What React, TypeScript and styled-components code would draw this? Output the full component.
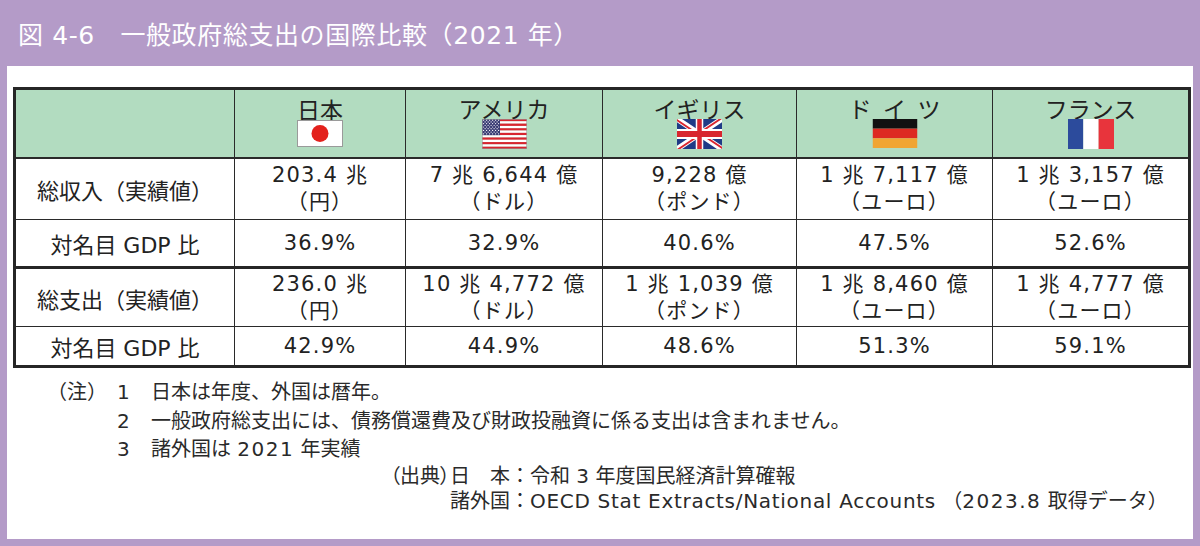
import React from "react";
import styled, { createGlobalStyle } from "styled-components";

const GlobalStyle = createGlobalStyle`
  body {
    margin: 0;
    background: #b49bc8;
    font-family: "DejaVu Sans", "Noto Sans CJK JP", sans-serif;
  }
`;

const Page = styled.div`
  width: 1200px;
  height: 546px;
  display: flex;
  flex-direction: column;
  background: #b49bc8;
`;

const TitleBar = styled.div`
  height: 66px;
  display: flex;
  align-items: center;
  padding-left: 18px;
  box-sizing: border-box;
  color: #fff;
  font-size: 25px;
  letter-spacing: 0.6px;
`;

const Panel = styled.div`
  margin: 0 7px;
  height: 473px;
  background: #fff;
  padding: 21px 6px 0;
  box-sizing: border-box;
`;

const Table = styled.table`
  width: 1175px;
  border-collapse: collapse;
  table-layout: fixed;
  border: 3px solid #262626;
  color: #222;
`;

const Row = styled.tr<{ $h: number; $groupStart?: boolean }>`
  height: ${(p) => p.$h}px;
  & > td,
  & > th {
    ${(p) => (p.$groupStart ? "border-top: 3px solid #262626;" : "")}
  }
`;

const HeadCell = styled.th`
  background: #b2dcc0;
  border: 1.5px solid #2a2a2a;
  border-bottom: 2px solid #2a2a2a;
  font-weight: 400;
  font-size: 23px;
  line-height: 24px;
  text-align: center;
  vertical-align: middle;
  padding: 0;
`;

const CountryName = styled.div`
  white-space: pre;
`;

const FlagBox = styled.div`
  display: flex;
  justify-content: center;
  margin-top: -3px;
`;

const LabelCell = styled.td`
  border: 1.5px solid #2a2a2a;
  font-size: 22px;
  text-align: center;
  vertical-align: middle;
  padding: 0;
`;

const ValueCell = styled.td`
  border: 1.5px solid #2a2a2a;
  font-size: 21px;
  line-height: 27px;
  text-align: center;
  vertical-align: middle;
  padding: 0;
  letter-spacing: 1.2px;
`;

const Notes = styled.div`
  margin-top: 10px;
  display: grid;
  grid-template-columns: 70px 34px auto;
  padding-left: 34px;
  font-size: 20px;
  line-height: 28.5px;
  color: #2a2a2a;
`;

const Source = styled.div`
  margin-left: 368px;
  display: grid;
  grid-template-columns: 69px 60px 20px auto;
  font-size: 20px;
  line-height: 25px;
  color: #2a2a2a;
  white-space: nowrap;
`;

const SourceTag = styled.span`
  padding-left: 9px;
  font-feature-settings: "palt";
`;

const Spread = styled.span`
  display: flex;
  justify-content: space-between;
`;

const Wide = styled.span<{ $ls?: number }>`
  letter-spacing: ${(p) => p.$ls ?? 1.5}px;
`;

const JapanFlag = () => (
  <svg width="46" height="27" viewBox="0 0 46 27">
    <rect x="0.5" y="0.5" width="45" height="26" fill="#fff" stroke="#9a9a9a" />
    <circle cx="23" cy="13.5" r="8.5" fill="#e3211c" />
  </svg>
);

const UsFlag = () => {
  const stripes = Array.from({ length: 13 }, (_, i) => i);
  const stars: [number, number][] = [];
  for (let r = 0; r < 9; r++) {
    const n = r % 2 === 0 ? 6 : 5;
    for (let c = 0; c < n; c++) {
      stars.push([1.6 + c * 3 + (r % 2 === 0 ? 0 : 1.5), 1.2 + r * 1.7]);
    }
  }
  return (
    <svg width="45" height="30" viewBox="0 0 45 30">
      {stripes.map((i) => (
        <rect
          key={i}
          x="0"
          y={(i * 30) / 13}
          width="45"
          height={30 / 13 + 0.05}
          fill={i % 2 === 0 ? "#d8262f" : "#fff"}
        />
      ))}
      <rect x="0" y="0" width="18" height={(30 / 13) * 7} fill="#3a3c74" />
      {stars.map(([x, y], i) => (
        <circle key={i} cx={x} cy={y} r="0.6" fill="#fff" />
      ))}
      <rect x="0.3" y="0.3" width="44.4" height="29.4" fill="none" stroke="#999" strokeWidth="0.6" />
    </svg>
  );
};

const UkFlag = () => (
  <svg width="45" height="30" viewBox="0 0 60 30" preserveAspectRatio="none">
    <defs>
      <clipPath id="ukT">
        <path d="M30,15 h30 v15 z v15 h-30 z h-30 v-15 z v-15 h30 z" />
      </clipPath>
    </defs>
    <rect width="60" height="30" fill="#1f3b86" />
    <path d="M0,0 L60,30 M60,0 L0,30" stroke="#fff" strokeWidth="6" />
    <path d="M0,0 L60,30 M60,0 L0,30" clipPath="url(#ukT)" stroke="#d8262f" strokeWidth="4" />
    <path d="M30,0 v30 M0,15 h60" stroke="#fff" strokeWidth="10" />
    <path d="M30,0 v30 M0,15 h60" stroke="#d8262f" strokeWidth="6" />
  </svg>
);

const GermanyFlag = () => (
  <svg width="46" height="29" viewBox="0 0 46 30">
    <rect y="0" width="46" height="10" fill="#111" />
    <rect y="10" width="46" height="10" fill="#dd2a22" />
    <rect y="20" width="46" height="10" fill="#f1a532" />
  </svg>
);

const FranceFlag = () => (
  <svg width="46" height="30" viewBox="0 0 46 30">
    <rect x="0" width="15.4" height="30" fill="#2c4b9c" />
    <rect x="15.3" width="15.4" height="30" fill="#fff" />
    <rect x="30.6" width="15.4" height="30" fill="#e8343c" />
  </svg>
);

const countries = [
  { name: "日本", flag: <JapanFlag /> },
  { name: "アメリカ", flag: <UsFlag /> },
  { name: "イギリス", flag: <UkFlag /> },
  { name: "ド\u2002イ\u2002ツ", flag: <GermanyFlag /> },
  { name: "フランス", flag: <FranceFlag /> },
];

const revenue = [
  ["203.4 兆", "（円）"],
  ["7 兆 6,644 億", "（ドル）"],
  ["9,228 億", "（ポンド）"],
  ["1 兆 7,117 億", "（ユーロ）"],
  ["1 兆 3,157 億", "（ユーロ）"],
];
const revenueRatio = ["36.9%", "32.9%", "40.6%", "47.5%", "52.6%"];
const spending = [
  ["236.0 兆", "（円）"],
  ["10 兆 4,772 億", "（ドル）"],
  ["1 兆 1,039 億", "（ポンド）"],
  ["1 兆 8,460 億", "（ユーロ）"],
  ["1 兆 4,777 億", "（ユーロ）"],
];
const spendingRatio = ["42.9%", "44.9%", "48.6%", "51.3%", "59.1%"];

const colWidths = [220, 171, 197, 194, 196, 197];

const App = () => (
  <Page>
    <GlobalStyle />
    <TitleBar>図 4-6　一般政府総支出の国際比較（2021 年）</TitleBar>
    <Panel>
      <Table>
        <colgroup>
          {colWidths.map((w, i) => (
            <col key={i} style={{ width: w }} />
          ))}
        </colgroup>
        <tbody>
          <Row $h={69}>
            <HeadCell />
            {countries.map((c) => (
              <HeadCell key={c.name}>
                <CountryName>{c.name}</CountryName>
                <FlagBox>{c.flag}</FlagBox>
              </HeadCell>
            ))}
          </Row>
          <Row $h={62}>
            <LabelCell>総収入（実績値）</LabelCell>
            {revenue.map(([a, b], i) => (
              <ValueCell key={i}>
                {a}
                <br />
                {b}
              </ValueCell>
            ))}
          </Row>
          <Row $h={48}>
            <LabelCell>対名目 GDP 比</LabelCell>
            {revenueRatio.map((v) => (
              <ValueCell key={v}>{v}</ValueCell>
            ))}
          </Row>
          <Row $h={59} $groupStart>
            <LabelCell>総支出（実績値）</LabelCell>
            {spending.map(([a, b], i) => (
              <ValueCell key={i}>
                {a}
                <br />
                {b}
              </ValueCell>
            ))}
          </Row>
          <Row $h={40}>
            <LabelCell>対名目 GDP 比</LabelCell>
            {spendingRatio.map((v) => (
              <ValueCell key={v}>{v}</ValueCell>
            ))}
          </Row>
        </tbody>
      </Table>
      <Notes>
        <span>（注）</span>
        <span>1</span>
        <span>日本は年度、外国は暦年。</span>
        <span />
        <span>2</span>
        <span>一般政府総支出には、債務償還費及び財政投融資に係る支出は含まれません。</span>
        <span />
        <span>3</span>
        <span>
          諸外国は <Wide>2021</Wide> 年実績
        </span>
      </Notes>
      <Source>
        <SourceTag>（出典）</SourceTag>
        <Spread>
          <span>日</span>
          <span>本</span>
        </Spread>
        <span>：</span>
        <span>令和 3 年度国民経済計算確報</span>
        <span />
        <span>諸外国</span>
        <span>：</span>
        <span>
          <Wide $ls={0.7}>OECD Stat Extracts/National Accounts</Wide> （<Wide>2023.8</Wide>{" "}
          取得データ）
        </span>
      </Source>
    </Panel>
  </Page>
);

export default App;
